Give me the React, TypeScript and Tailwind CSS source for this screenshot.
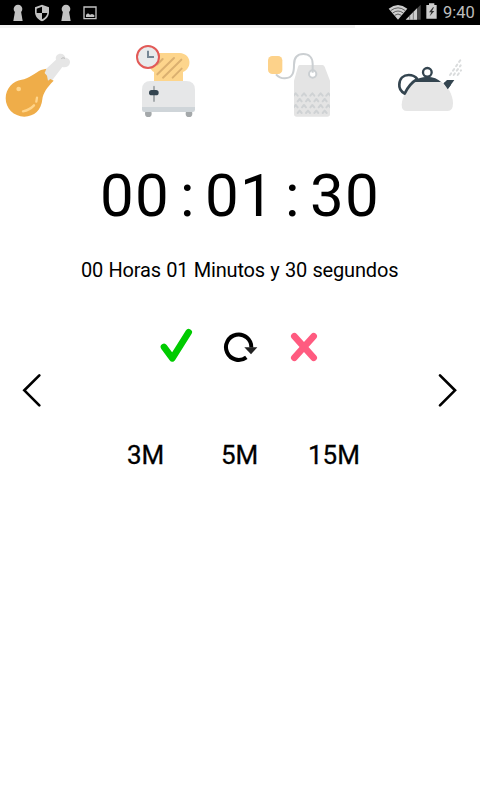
import React from "react";

function StatusBar() {
  return (
    <header className="flex h-[25px] bg-black text-[#bdbdbd]">
      <svg width="120" height="25" viewBox="0 0 360 75" fill="#c2c2c2">
        {[54, 198].map((x) => (
          <g key={x} transform={`translate(${x} 0)`}>
            <circle cx="0" cy="27" r="13" />
            <path d="M-9 34H9L14 63H-14Z" />
          </g>
        ))}
        <path d="M126 14L147 22V36C147 49 138 59 126 64C114 59 105 49 105 36V22Z" />
        <path d="M126 20L110 26V39H126ZM126 39V58C134 54 141 47 142 39Z" fill="#000" />
        <path d="M252 21H288V56H252Z" fill="none" stroke="#c2c2c2" strokeWidth="4" />
        <path d="M258 51V44L264 40L270 44L276 42L283 45V51Z" />
      </svg>
      <div className="flex-1" />
      <svg width="73" height="25" viewBox="0 0 219 75">
        <path d="M56 26Q84 4 112 26L84 59Z" fill="#cdcdcd" />
        <path d="M62 32Q84 15 106 32M68 39Q84 27 100 39M74 46Q84 38 94 46" fill="none" stroke="#222" strokeWidth="2" />
        <path d="M107 59L152 14V59Z" fill="#474747" />
        <path d="M107 59L141 25V59Z" fill="#cdcdcd" />
        <path d="M119 46V59M130 35V59" stroke="#555" strokeWidth="2" />
        <path d="M169 15H177V10H193V15H200V56H169Z" fill="#cdcdcd" />
        <path d="M189 22L177 37H184L179 49L193 33H186L192 22Z" fill="#333" />
      </svg>
      <span className="w-[37px] whitespace-nowrap pt-px font-['Roboto',sans-serif] text-[16.5px] leading-[24px]">9:40</span>
    </header>
  );
}

function Drumstick() {
  return (
    <svg width="80" height="80" viewBox="0 0 240 240">
      <path d="M134 76L168 44C165 34 172 26 182 26C190 26 195 32 196 38C205 38 211 45 210 53C208 65 196 69 187 66L155 108H140Z" fill="#e6e6e6" />
      <path d="M184 41Q188 36 195 40" fill="none" stroke="#bbb" strokeWidth="3" />
      <path d="M139 71L134 84L141 92L144 107L151 102L161 107C142 126 129 144 127 163C124 195 103 215 73 215C41 215 17 190 17 160C17 130 39 108 65 104C84 102 108 82 123 75Z" fill="#efad49" />
      <circle cx="56" cy="132" r="7" fill="#ffd58b" />
      <path d="M69 199Q89 195 102 181M109 170L111 158" fill="none" stroke="#ffd58b" strokeWidth="7" strokeLinecap="round" />
    </svg>
  );
}

function Toaster() {
  return (
    <svg width="80" height="80" viewBox="0 0 240 240">
      <path d="M85 39H149C186 42 187 85 159 96V130H72V96C50 84 55 44 85 39Z" fill="#fdd58c" />
      <path d="M98 57L82 73M132 54L82 103M154 59L99 113M155 86L128 113" stroke="#dbb070" strokeWidth="6" strokeLinecap="round" />
      <circle cx="55" cy="221" r="10" fill="#a4a8aa" />
      <circle cx="177" cy="221" r="10" fill="#a4a8aa" />
      <path d="M36 203V149Q36 123 62 123H168Q195 123 195 149V203Z" fill="#e6e7e8" />
      <path d="M36 201H195V209Q195 216 188 216H43Q36 216 36 209Z" fill="#cfd5d9" />
      <path d="M72 140V183" stroke="#a6abae" strokeWidth="6" strokeLinecap="round" />
      <rect x="57" y="150" width="29" height="16" rx="8" fill="#344550" />
      <circle cx="54" cy="51" r="33" fill="#e8ebec" stroke="#e25a57" strokeWidth="6" />
      <path d="M54 32V51H72" fill="none" stroke="#758795" strokeWidth="6" />
    </svg>
  );
}

const teaRows = [
  { y: 149, xs: [107, 132, 157, 182, 205] },
  { y: 166, xs: [119, 144, 169, 194] },
  { y: 184, xs: [107, 132, 157, 182, 205] },
  { y: 201, xs: [119, 144, 169, 194] },
];

function TeaBag() {
  return (
    <svg width="80" height="80" viewBox="0 0 240 240">
      <clipPath id="tag">
        <path d="M119 60H187Q192 60 194 65L210 107V207Q210 215 202 215H110Q102 215 102 207V107L114 65Q115 60 119 60Z" />
      </clipPath>
      <path d="M119 60H187Q192 60 194 65L210 107V207Q210 215 202 215H110Q102 215 102 207V107L114 65Q115 60 119 60Z" fill="#e4e4e4" />
      <circle cx="158" cy="87" r="11" fill="#fff" stroke="#cbcfd2" strokeWidth="6" />
      <path d="M48 88Q60 101 75 100C99 99 102 81 102 59C102 38 113 27 130 27C147 27 158 38 158 56V83" fill="none" stroke="#cbcfd2" strokeWidth="6" />
      <rect x="24" y="33" width="43" height="54" rx="13" fill="#fdd28a" />
      <g clipPath="url(#tag)" fill="none" stroke="#cfd2d4" strokeWidth="6" strokeLinecap="round" strokeLinejoin="round">
        {teaRows.map((row) =>
          row.xs.map((x) => (
            <path key={`${x}-${row.y}`} d={`M${x - 6} ${row.y + 3}L${x} ${row.y - 4}L${x + 6} ${row.y + 3}`} />
          )),
        )}
      </g>
    </svg>
  );
}

function Teapot() {
  return (
    <svg width="80" height="70" viewBox="0 0 240 210">
      <circle cx="112" cy="67" r="13" fill="none" stroke="#344550" strokeWidth="7" />
      <path d="M66 98Q86 80 112 80Q138 80 156 98Z" fill="#344550" />
      <path d="M171 90H193L172 119L160 101Z" fill="#344550" />
      <path d="M72 96H154C171 105 189 134 189 160Q189 183 173 183H51Q35 183 35 165C36 140 53 111 72 96Z" fill="#e6e6e6" />
      <path d="M44 131C31 123 27 113 28 103C29 85 41 75 56 75Q73 75 82 87Q58 101 44 131Z" fill="#fff" stroke="#344550" strokeWidth="8" strokeLinejoin="round" />
      <path d="M161 99L173 118L183 104L171 93Z" fill="#344550" />
      <path d="M180 75L212 29M191 75L212 46M203 75L213 61" stroke="#dadcdd" strokeWidth="6" strokeDasharray="6 10" strokeLinecap="round" />
    </svg>
  );
}

function Chevron({ path }: { path: string }) {
  return (
    <svg width="50" height="50" viewBox="0 0 150 150">
      <path d={path} fill="none" stroke="#000" strokeWidth="8" strokeLinecap="round" />
    </svg>
  );
}

export default function App() {
  return (
    <main className="h-[800px] w-[480px] overflow-hidden bg-white font-['Roboto',sans-serif] text-black">
      <StatusBar />
      <div className="h-[3px] w-[355px] bg-[#f3f3f3]" />
      <nav className="flex h-[92px] pt-[12px]">
        <div className="mt-[5px] w-[130px]"><Drumstick /></div>
        <div className="w-[130px]"><Toaster /></div>
        <div className="mt-[5px] w-[130px]"><TeaBag /></div>
        <div className="mt-[10px] w-[90px]"><Teapot /></div>
      </nav>
      <div className="flex h-[70px] pl-[100px] pt-[41px] text-[60px] leading-[70px] tracking-[1.25px]">
        <span className="w-[80px]">00</span>
        <span className="w-[25px]">:</span>
        <span className="w-[80px]">01</span>
        <span className="w-[25px]">:</span>
        <span>30</span>
      </div>
      <p className="mt-[68px] h-[24px] whitespace-nowrap pl-[81px] text-[20px] leading-[24px] tracking-[-0.17px] [word-spacing:0.55px]">00 Horas 01 Minutos y 30 segundos</p>
      <svg className="mt-[38px] ml-[150px] block" width="180" height="45" viewBox="0 0 540 135">
        <path d="M42 81L67 115L116 37" fill="none" stroke="#00cb00" strokeWidth="20" strokeLinecap="round" strokeLinejoin="round" />
        <path d="M289 112A38 38 0 1 1 304 83" fill="none" stroke="#000" strokeWidth="12" />
        <path d="M283 82H322L303 103Z" fill="#222" />
        <path d="M433 49L491 113M491 49L433 113" stroke="#ff5b80" strokeWidth="20" strokeLinecap="round" />
      </svg>
      <div className="flex h-[50px] justify-between pl-[10px]">
        <Chevron path="M88 31L43 76L88 121" />
        <Chevron path="M30 31L75 76L30 121" />
      </div>
      <div className="mt-[25px] flex pl-[127px] text-[26px] leading-[30px] [-webkit-text-stroke:0.3px_black]">
        <span className="w-[94px]">3M</span>
        <span className="w-[87px]">5M</span>
        <span>15M</span>
      </div>
    </main>
  );
}
